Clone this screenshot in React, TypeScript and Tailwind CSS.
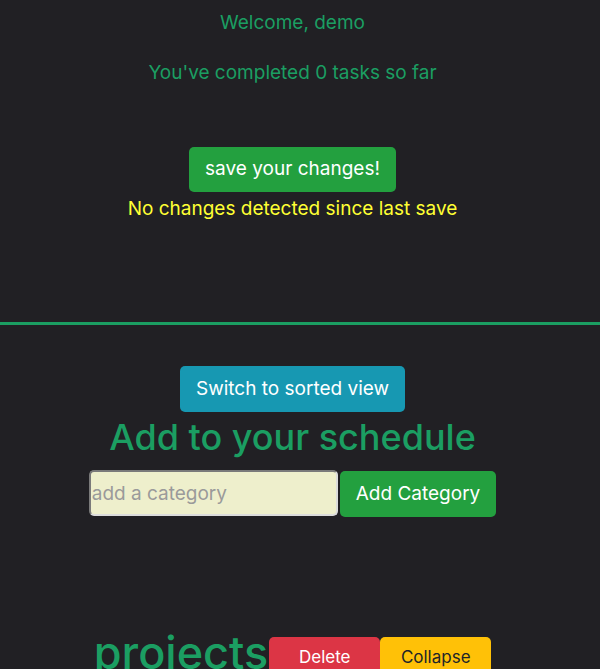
export default function App() {
  return (
    <div
      className="min-h-[669px] h-[669px] overflow-hidden bg-[#212024] text-[#1b9e62]"
      style={{ fontFamily: "Inter, 'Noto Sans', sans-serif" }}
    >
      <div className="w-[585px] flex flex-col items-center text-center">
        <p className="mt-[10px] text-[19px] leading-[26px]">Welcome, demo</p>
        <p className="mt-[24px] text-[19px] leading-[26px]">You've completed 0 tasks so far</p>

        <button className="mt-[61px] h-[45px] px-[16px] rounded-[5px] bg-[#23a03f] text-white text-[19px]">
          save your changes!
        </button>
        <p className="mt-[4px] text-[19px] leading-[26px] text-[#ffff33]">
          No changes detected since last save
        </p>
      </div>

      <div className="mt-[100px] h-[3px] w-full bg-[#1b9e62]" />

      <div className="w-[585px] flex flex-col items-center text-center">
        <button className="mt-[41px] h-[46px] px-[16px] rounded-[5px] bg-[#1798b2] text-white text-[19px]">
          Switch to sorted view
        </button>
        <h1 className="text-[36px] font-medium leading-[52px] -mt-[1px]">Add to your schedule</h1>
        <div className="mt-[7px] flex items-start">
          <input
            placeholder="add a category"
            className="w-[249px] h-[46px] px-[1px] rounded-[5px] border-2 border-t-[#7a7a7a] border-l-[#7a7a7a] border-b-[#dcdcdc] border-r-[#dcdcdc] bg-[#eeefcc] text-[19px] text-black placeholder:text-[#9a9a9a] outline-none"
          />
          <button className="ml-[2px] mt-[1px] h-[46px] px-[16px] rounded-[5px] bg-[#23a03f] text-white text-[19px]">
            Add Category
          </button>
        </div>

        <div className="mt-[108px] flex items-start">
          <h2 className="text-[45px] font-medium leading-[56px] mr-[1px]">projects</h2>
          <div className="flex mt-[12px]">
            <button className="w-[111px] h-[46px] rounded-t-[5px] bg-[#dc3545] text-white text-[17px] pb-[10px] pt-[6px]">
              Delete
            </button>
            <button className="w-[111px] h-[46px] rounded-t-[5px] bg-[#ffc107] text-[#212529] text-[17px] pb-[10px] pt-[6px]">
              Collapse
            </button>
          </div>
        </div>
      </div>
    </div>
  );
}
